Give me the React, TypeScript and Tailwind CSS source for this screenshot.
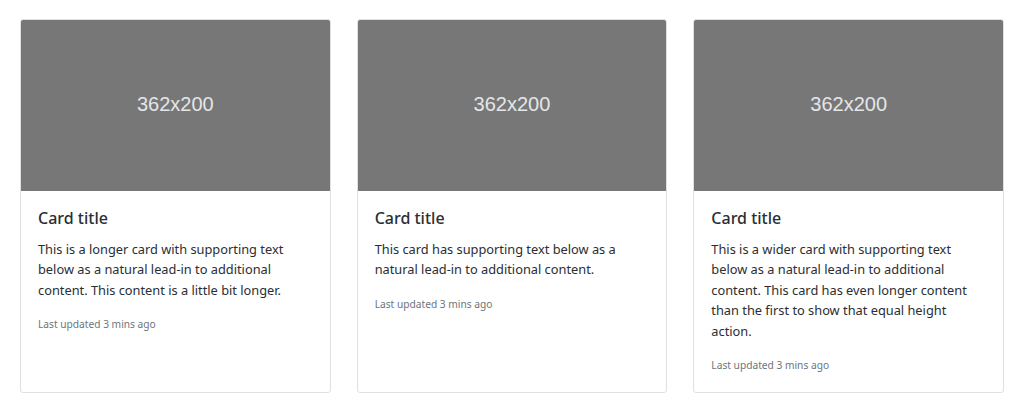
const cards = [
  {
    text: "This is a longer card with supporting text below as a natural lead-in to additional content. This content is a little bit longer.",
  },
  {
    text: "This card has supporting text below as a natural lead-in to additional content.",
  },
  {
    text: "This is a wider card with supporting text below as a natural lead-in to additional content. This card has even longer content than the first to show that equal height action.",
  },
];

const App = () => {
  return (
    <div className="min-h-screen w-full bg-white px-[20px] pt-[19px] font-['Noto_Sans',sans-serif] text-[#2a2e33]">
      <div className="grid grid-cols-3 items-stretch gap-[26px]">
        {cards.map((card, i) => (
          <div
            key={i}
            className="flex flex-col overflow-hidden rounded-[3px] border border-[#e0e0e0] bg-white"
          >
            {/* placeholder image */}
            <div className="flex h-[171px] items-center justify-center bg-[#777777] pb-[3px]">
              <span className="font-['Liberation_Sans',Arial,sans-serif] text-[20px] leading-[24px] text-[#e4e6e8]">
                362x200
              </span>
            </div>

            <div className="px-[17px] pt-[17px] pb-[18px]">
              <h5 className="mb-[10px] text-[16px] leading-[20.5px] font-medium">Card title</h5>
              <p className="mb-[16px] text-[12.8px] leading-[20.5px]">{card.text}</p>
              <p className="text-[10.2px] leading-[16.5px] text-[#6c757d]">Last updated 3 mins ago</p>
            </div>
          </div>
        ))}
      </div>
    </div>
  );
};

export default App;
